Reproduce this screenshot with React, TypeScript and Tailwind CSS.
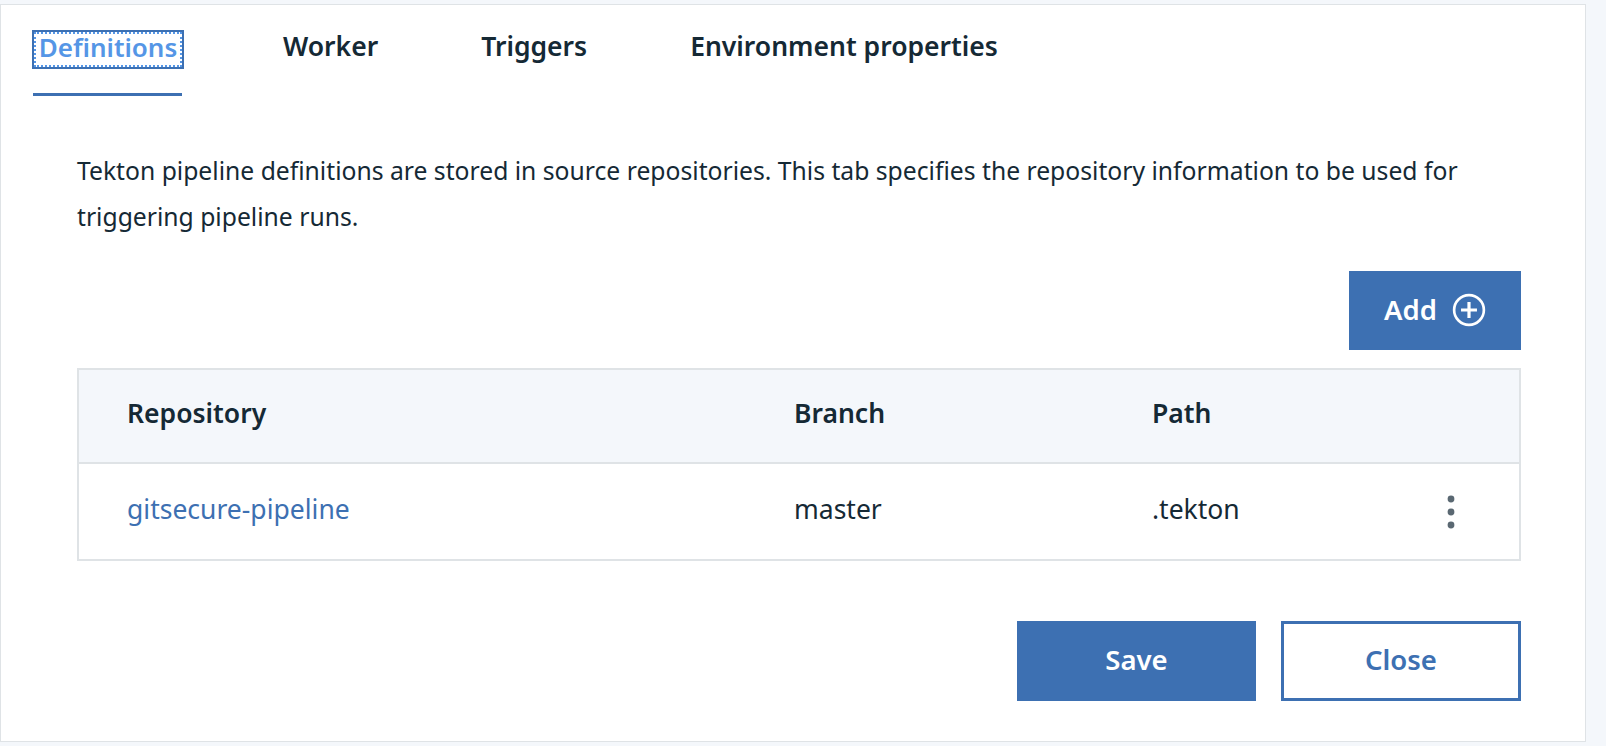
import React from "react";

const font = { fontFamily: '"Noto Sans", "Liberation Sans", sans-serif' };

function PlusCircle() {
  return (
    <svg width="34" height="34" viewBox="0 0 32 32" fill="none" stroke="white" strokeWidth="2.5">
      <circle cx="16" cy="16" r="14" />
      <path d="M16 8.5v15M8.5 16h15" strokeLinecap="butt" strokeWidth="3" />
    </svg>
  );
}

function Kebab() {
  return (
    <svg width="8" height="34" viewBox="0 0 8 34" fill="#5a6872">
      <circle cx="4" cy="4" r="3.4" />
      <circle cx="4" cy="17" r="3.4" />
      <circle cx="4" cy="30" r="3.4" />
    </svg>
  );
}

export default function App() {
  return (
    <div className="w-[1606px] h-[746px] bg-[#f4f7fb] pt-[4px] overflow-hidden" style={font}>
      <div className="w-[1586px] h-[738px] bg-white border border-[#dfe3e6] flex flex-col">
        {/* Tabs */}
        <div className="flex items-start pl-[31px] pt-[25px] text-[26.5px] font-semibold text-[#152935]">
          <div className="flex flex-col">
            <div className="h-[39px] w-[152px] border-2 border-[#3d70b2]">
              <div className="h-full border-2 border-dotted border-[#5596e6] flex items-center justify-center pb-[6px] text-[26px] text-[#5596e6] leading-none">
                Definitions
              </div>
            </div>
            <div className="mt-[24px] ml-[1px] w-[149px] h-[3px] bg-[#3d70b2]" />
          </div>
          <div className="h-[39px] flex items-center pb-[6px] ml-[99px] leading-none">Worker</div>
          <div className="h-[39px] flex items-center pb-[6px] ml-[103px] leading-none">Triggers</div>
          <div className="h-[39px] flex items-center pb-[6px] ml-[103px] leading-none">Environment properties</div>
        </div>

        {/* Content */}
        <div className="pl-[76px] pr-[64px] flex flex-col">
          <p className="mt-[52px] text-[24.7px] leading-[46px] text-[#152935]">
            Tekton pipeline definitions are stored in source repositories. This tab specifies the repository information to be used for triggering pipeline runs.
          </p>

          <div className="flex justify-end mt-[31px]">
            <button className="w-[172px] h-[79px] bg-[#3d70b2] text-white text-[27.5px] font-semibold flex items-center justify-center gap-[15px] pb-[2px]">
              <span>Add</span>
              <PlusCircle />
            </button>
          </div>

          {/* Table */}
          <div className="mt-[18px] border-2 border-[#dfe3e6]">
            <div className="grid grid-cols-[667px_358px_1fr_120px] h-[94px] bg-[#f4f7fb] items-center text-[26.5px] font-semibold text-[#152935] border-b-2 border-[#dfe3e6]">
              <div className="pl-[48px] pb-[4px]">Repository</div>
              <div className="pl-[48px] pb-[4px]">Branch</div>
              <div className="pl-[48px] pb-[4px]">Path</div>
              <div />
            </div>
            <div className="grid grid-cols-[667px_358px_1fr_120px] h-[95px] items-center text-[26.5px] text-[#152935]">
              <div className="pl-[48px] pb-[4px] text-[#3d70b2]">gitsecure-pipeline</div>
              <div className="pl-[48px] pb-[4px]">master</div>
              <div className="pl-[48px] pb-[4px]">.tekton</div>
              <div className="flex justify-end pr-[64px]">
                <Kebab />
              </div>
            </div>
          </div>

          {/* Footer buttons */}
          <div className="flex justify-end gap-[25px] mt-[60px]">
            <button className="w-[239px] h-[80px] bg-[#3d70b2] text-white text-[27.5px] font-semibold flex items-center justify-center pb-[3px]">
              Save
            </button>
            <button className="w-[240px] h-[80px] bg-white border-[3px] border-[#3d70b2] text-[#3d70b2] text-[27.5px] font-semibold flex items-center justify-center pb-[3px]">
              Close
            </button>
          </div>
        </div>
      </div>
    </div>
  );
}
